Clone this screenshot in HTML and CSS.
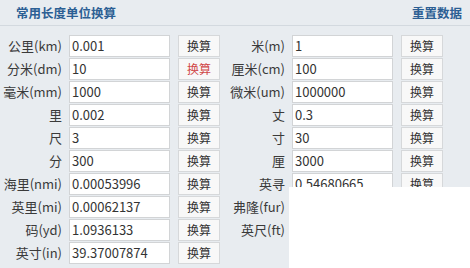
FILE: index.html
```html
<!DOCTYPE html>
<html lang="zh-CN">
<head>
    <meta charset="UTF-8">
    <title>常用长度单位换算</title>
    <link rel="stylesheet" href="styles.css">
</head>
<body>
    <div class="panel">
        <div class="panel-head">
            <h1>常用长度单位换算</h1>
            <a class="reset" href="#">重置数据</a>
        </div>
        <div class="form">
            <div class="row">
                <div class="unit"><label>公里(km)</label><input type="text" value="0.001"><button>换算</button></div>
                <div class="unit"><label>米(m)</label><input type="text" value="1"><button>换算</button></div>
            </div>
            <div class="row">
                <div class="unit"><label>分米(dm)</label><input type="text" value="10"><button class="active">换算</button></div>
                <div class="unit"><label>厘米(cm)</label><input type="text" value="100"><button>换算</button></div>
            </div>
            <div class="row">
                <div class="unit"><label>毫米(mm)</label><input type="text" value="1000"><button>换算</button></div>
                <div class="unit"><label>微米(um)</label><input type="text" value="1000000"><button>换算</button></div>
            </div>
            <div class="row">
                <div class="unit"><label>里</label><input type="text" value="0.002"><button>换算</button></div>
                <div class="unit"><label>丈</label><input type="text" value="0.3"><button>换算</button></div>
            </div>
            <div class="row">
                <div class="unit"><label>尺</label><input type="text" value="3"><button>换算</button></div>
                <div class="unit"><label>寸</label><input type="text" value="30"><button>换算</button></div>
            </div>
            <div class="row">
                <div class="unit"><label>分</label><input type="text" value="300"><button>换算</button></div>
                <div class="unit"><label>厘</label><input type="text" value="3000"><button>换算</button></div>
            </div>
            <div class="row">
                <div class="unit"><label>海里(nmi)</label><input type="text" value="0.00053996"><button>换算</button></div>
                <div class="unit"><label>英寻</label><input type="text" value="0.54680665"><button>换算</button></div>
            </div>
            <div class="row">
                <div class="unit"><label>英里(mi)</label><input type="text" value="0.00062137"><button>换算</button></div>
                <div class="unit"><label>弗隆(fur)</label><input type="text" value="0.00497097"><button>换算</button></div>
            </div>
            <div class="row">
                <div class="unit"><label>码(yd)</label><input type="text" value="1.0936133"><button>换算</button></div>
                <div class="unit"><label>英尺(ft)</label><input type="text" value="3.2808399"><button>换算</button></div>
            </div>
            <div class="row">
                <div class="unit"><label>英寸(in)</label><input type="text" value="39.37007874"><button>换算</button></div>
            </div>
        </div>
        <div class="cover"></div>
    </div>
</body>
</html>
```

FILE: styles.css
```css
body {
    margin: 0;
    background-color: #e8ecf0;
    font-family: "Noto Sans CJK SC", "Noto Sans", sans-serif;
    color: #3a3a3a;
}

.panel {
    position: relative;
    width: 470px;
    height: 268px;
    overflow: hidden;
}

.panel-head {
    display: flex;
    justify-content: space-between;
    align-items: center;
    height: 25px;
    padding: 0 8px 0 16px;
    border-bottom: 1px solid #d3d9df;
}

.panel-head h1 {
    margin: 0;
    font-size: 12.5px;
    font-weight: bold;
    color: #2c5f94;
}

.reset {
    font-size: 12.5px;
    font-weight: bold;
    color: #2c5f94;
    text-decoration: none;
}

.form {
    padding-top: 8px;
}

.row {
    display: flex;
    height: 23px;
    gap: 3px;
}

.unit {
    display: flex;
    align-items: center;
    width: 220px;
}

.unit label {
    width: 62px;
    text-align: right;
    font-size: 13px;
    line-height: 22px;
    white-space: nowrap;
}

.unit input {
    box-sizing: border-box;
    width: 101px;
    height: 22px;
    margin-left: 7px;
    padding: 0 2px;
    border: 1px solid #d2d4d6;
    background-color: #ffffff;
    font-family: "Noto Sans CJK SC", "Noto Sans", sans-serif;
    font-size: 13px;
    color: #333333;
    outline: none;
}

.unit button {
    box-sizing: border-box;
    width: 42px;
    height: 22px;
    margin-left: 8px;
    padding: 0;
    border: 1px solid #d6d8da;
    background-color: #f8f8f8;
    font-family: "Noto Sans CJK SC", "Noto Sans", sans-serif;
    font-size: 12px;
    color: #333333;
    cursor: pointer;
}

.unit button.active {
    color: #d04848;
}

.cover {
    position: absolute;
    left: 289px;
    top: 187px;
    right: 0;
    bottom: 0;
    background-color: #ffffff;
}
```
